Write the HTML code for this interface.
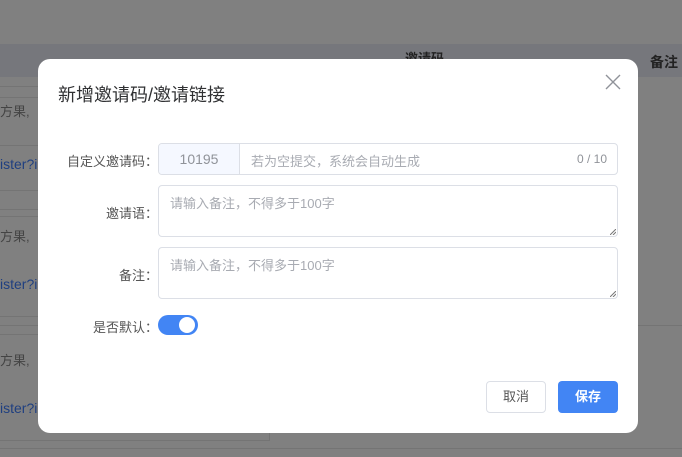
<!DOCTYPE html><html><head><meta charset="utf-8"><style>
*{box-sizing:border-box;margin:0;padding:0}
body{width:682px;height:457px;overflow:hidden;background:#808080;font-family:"Liberation Sans","Noto Sans CJK SC",sans-serif;position:relative;font-size:13px}
.a{position:absolute}
.hl{position:absolute;left:0;height:1px;background:#747474}
.lbl{position:absolute;right:524px;color:#555;font-size:13px;text-align:right;white-space:nowrap}
.box{position:absolute;border:1px solid #dcdfe6;border-radius:4px;background:#fff}
.ph{color:#a8abb2;font-size:13px}
.rz{position:absolute;right:1px;bottom:1px}
</style></head><body>
<div class="a" style="left:0;top:44px;width:682px;height:33px;background:#76777c"></div>
<div class="a" style="left:405px;top:48px;font-size:13px;font-weight:bold;color:#222">邀请码</div>
<div class="a" style="left:650px;top:52px;font-size:14px;font-weight:bold;color:#222">备注</div>
<div class="hl" style="top:86px;width:40px"></div><div class="hl" style="top:97px;width:40px"></div>
<div class="hl" style="top:145px;width:40px"></div><div class="hl" style="top:190px;width:40px"></div>
<div class="hl" style="top:209px;width:40px"></div><div class="hl" style="top:216px;width:40px"></div>
<div class="hl" style="top:316px;width:40px"></div><div class="hl" style="top:325px;width:682px"></div><div class="hl" style="top:334px;width:40px"></div>
<div class="hl" style="top:440px;width:270px"></div><div class="hl" style="top:448px;width:682px"></div>
<div class="a" style="left:269px;top:425px;width:1px;height:16px;background:#747474"></div>
<div class="a" style="left:0;top:101px;color:#444;font-size:13px">方果,</div>
<div class="a" style="left:0;top:226px;color:#444;font-size:13px">方果,</div>
<div class="a" style="left:0;top:350px;color:#444;font-size:13px">方果,</div>
<div class="a" style="left:0;top:156px;color:#1f3f80;font-size:14px">ister?i</div>
<div class="a" style="left:0;top:276px;color:#1f3f80;font-size:14px">ister?i</div>
<div class="a" style="left:0;top:400px;color:#1f3f80;font-size:14px">ister?i</div>

<div class="a" style="left:38px;top:59px;width:600px;height:374px;background:#fff;border-radius:12px">
<div class="a" style="left:20px;top:22px;font-size:18px;color:#303133">新增邀请码/邀请链接</div>
<svg class="a" style="left:567px;top:15px" width="16" height="16" viewBox="0 0 16 16"><path d="M1 1L15 15M15 1L1 15" stroke="#909399" stroke-width="1.4"/></svg>
</div>
<div class="lbl" style="top:151px">自定义邀请码：</div>
<div class="box" style="left:158px;top:143px;width:460px;height:32px;overflow:hidden">
<div class="a" style="left:0;top:0;width:81px;height:30px;background:#f5f8ff;border-right:1px solid #dcdfe6;color:#909399;font-size:14px;text-align:center;line-height:30px">10195</div>
<div class="a ph" style="left:92px;top:7px">若为空提交，系统会自动生成</div>
<div class="a" style="right:10px;top:8px;color:#909399;font-size:12px">0 / 10</div>
</div>
<div class="lbl" style="top:203px">邀请语：</div>
<div class="box" style="left:158px;top:185px;width:460px;height:52px"><div class="a ph" style="left:11px;top:7px">请输入备注，不得多于100字</div><svg class="rz" width="6" height="6"><path d="M0 6L6 0M3 6L6 3" stroke="#777" stroke-width="1"/></svg></div>
<div class="lbl" style="top:265px">备注：</div>
<div class="box" style="left:158px;top:247px;width:460px;height:52px"><div class="a ph" style="left:11px;top:7px">请输入备注，不得多于100字</div><svg class="rz" width="6" height="6"><path d="M0 6L6 0M3 6L6 3" stroke="#777" stroke-width="1"/></svg></div>
<div class="lbl" style="top:317px">是否默认：</div>
<div class="a" style="left:158px;top:315px;width:40px;height:20px;border-radius:10px;background:#4285f4"><div class="a" style="left:21px;top:2px;width:16px;height:16px;border-radius:50%;background:#fff"></div></div>
<div class="box" style="left:486px;top:381px;width:60px;height:32px;text-align:center;line-height:30px;color:#555;font-size:13px">取消</div>
<div class="a" style="left:558px;top:381px;width:60px;height:32px;border-radius:4px;background:#4285f4;color:#fff;text-align:center;line-height:32px;font-size:13px;font-weight:bold">保存</div>
</body></html>
